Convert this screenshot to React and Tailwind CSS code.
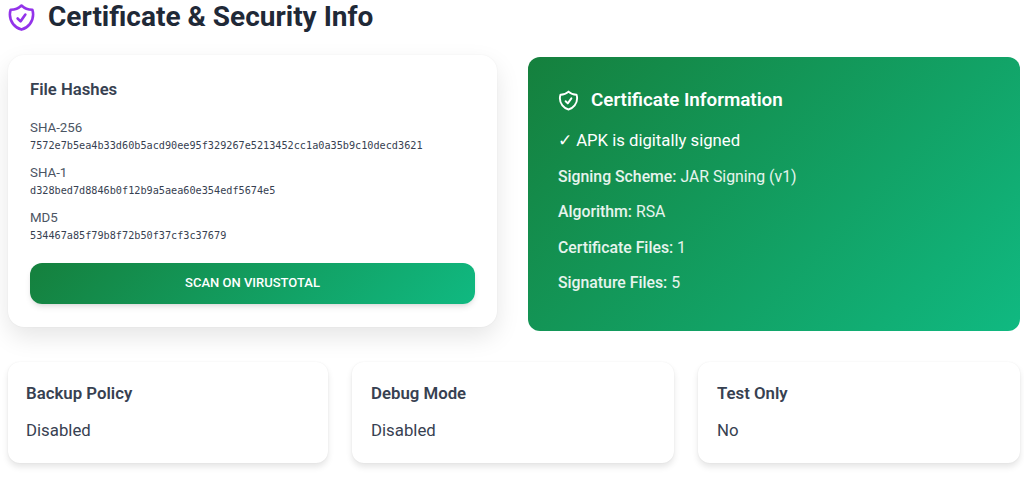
import React from "react";

const hashes = [
  { label: "SHA-256", value: "7572e7b5ea4b33d60b5acd90ee95f329267e5213452cc1a0a35b9c10decd3621" },
  { label: "SHA-1", value: "d328bed7d8846b0f12b9a5aea60e354edf5674e5" },
  { label: "MD5", value: "534467a85f79b8f72b50f37cf3c37679" },
];

const certRows = [
  { label: "Signing Scheme:", value: "JAR Signing (v1)" },
  { label: "Algorithm:", value: "RSA" },
  { label: "Certificate Files:", value: "1" },
  { label: "Signature Files:", value: "5" },
];

const infoCards = [
  { title: "Backup Policy", value: "Disabled" },
  { title: "Debug Mode", value: "Disabled" },
  { title: "Test Only", value: "No" },
];

const ShieldIcon = ({ className }) => (
  <svg className={className} viewBox="0 0 24 24" fill="none" stroke="currentColor" strokeWidth="2" strokeLinecap="round" strokeLinejoin="round">
    <path d="M9 12.75 11.25 15 15 9.75m-3-7.036A11.959 11.959 0 0 1 3.598 6 11.99 11.99 0 0 0 3 9.749c0 5.592 3.824 10.29 9 11.623 5.176-1.332 9-6.03 9-11.622 0-1.31-.21-2.571-.598-3.751h-.152c-3.196 0-6.1-1.248-8.25-3.285Z" />
  </svg>
);

const App = () => {
  return (
    <div className="h-[480px] overflow-hidden bg-white pl-2 pr-1 font-['Roboto',sans-serif]">
      <div className="flex h-[34px] items-center">
        <ShieldIcon className="-ml-[2px] h-[31px] w-[31px] text-[#9333ea]" />
        <h1 className="ml-[11px] text-[28px] leading-[34px] font-bold text-[#1f2937]">Certificate &amp; Security Info</h1>
      </div>

      <div className="mt-[21px] flex items-start gap-[31px]">
        <div className="h-[272px] w-[489px] rounded-2xl bg-white px-[22px] pt-[23px] shadow-[0_0_2px_rgba(0,0,0,0.06),0_10px_25px_rgba(0,0,0,0.1)]">
          <h3 className="text-[16.7px] leading-[24px] font-semibold text-[#374151]">File Hashes</h3>
          <div className="mt-[16px] flex flex-col gap-[9.85px]">
            {hashes.map((item) => (
              <div key={item.label}>
                <p className="text-[13.3px] leading-[20px] text-[#4b5563]">{item.label}</p>
                <p className="mt-[1px] font-['DejaVu_Sans_Mono',monospace] text-[10.2px] leading-[14px] text-[#374151]">{item.value}</p>
              </div>
            ))}
          </div>
          <button className="mt-[20px] h-[41px] w-full rounded-xl bg-[linear-gradient(135deg,#15803d,#10b981)] text-[13px] font-medium text-white shadow-md">
            SCAN ON VIRUSTOTAL
          </button>
        </div>

        <div className="mt-[2px] h-[274px] w-[492px] rounded-xl bg-[linear-gradient(135deg,#15803d,#10b981)] px-[30px] pt-[30px] text-white">
          <div className="flex items-center gap-[11px]">
            <ShieldIcon className="-ml-[1px] h-[23px] w-[23px]" />
            <h3 className="text-[18.8px] leading-[26px] font-semibold">Certificate Information</h3>
          </div>
          <p className="mt-[16px] text-[16.7px] leading-[24px]">✓ APK is digitally signed</p>
          <div className="mt-[11.5px] flex flex-col gap-[11.5px]">
            {certRows.map((row) => (
              <p key={row.label} className="text-[15.8px] leading-[24px] text-white/90">
                <span className="font-medium">{row.label}</span> {row.value}
              </p>
            ))}
          </div>
        </div>
      </div>

      <div className="mt-[31px] grid grid-cols-[320px_322px_322px] gap-6">
        {infoCards.map((card) => (
          <div key={card.title} className="h-[101px] rounded-xl bg-white px-[18px] pt-[19px] shadow-[0_0_2px_rgba(0,0,0,0.06),0_4px_6px_rgba(0,0,0,0.1)] [&:not(:first-child)]:pl-[19px]">
            <h4 className="text-[16.8px] leading-[24px] font-semibold text-[#374151]">{card.title}</h4>
            <p className="mt-[13px] text-[16.8px] leading-[24px] text-[#374151]">{card.value}</p>
          </div>
        ))}
      </div>
    </div>
  );
};

export default App;
